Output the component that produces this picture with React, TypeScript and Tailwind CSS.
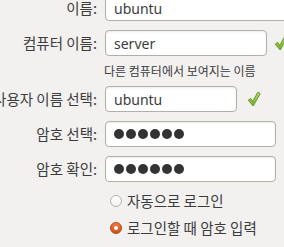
const labelFont = { fontFamily: '"Noto Sans CJK KR", "Noto Sans", sans-serif' };
const entryFont = { fontFamily: '"Noto Sans", "Noto Sans CJK KR", sans-serif' };

const Check = () => (
  <svg width="14" height="16" viewBox="0 0 14 16" className="shrink-0">
    <defs>
      <linearGradient id="chk" x1="0" y1="0" x2="0" y2="1">
        <stop offset="0" stopColor="#b5e061" />
        <stop offset="1" stopColor="#76b02a" />
      </linearGradient>
    </defs>
    <path
      d="M1.2 9.2 L3.8 7.4 L5.6 10.6 L10.8 1.2 L13.2 2.6 L6.2 15 Z"
      fill="url(#chk)"
      stroke="#5d8f1e"
      strokeWidth="0.9"
      strokeLinejoin="round"
    />
  </svg>
);

const Entry = ({ width, children }: { width: string; children: React.ReactNode }) => (
  <div
    className={`${width} h-[26px] shrink-0 flex items-center pl-2 rounded-[4px] border border-[#b3afa8] bg-white shadow-[inset_0_1px_2px_rgba(0,0,0,0.08)] text-[14px] text-[#3c3c3c]`}
    style={entryFont}
  >
    {children}
  </div>
);

const Dots = () => (
  <div className="flex gap-[2px]">
    {[0, 1, 2, 3, 4, 5].map((i) => (
      <span key={i} className="w-[10px] h-[10px] rounded-full bg-[#333333]" />
    ))}
  </div>
);

const Row = ({ label, children }: { label: string; children: React.ReactNode }) => (
  <div className="flex items-center">
    <div className="w-[97px] shrink-0 flex justify-end whitespace-nowrap text-[14.5px] text-[#3c3c3c]" style={labelFont}>
      {label}
    </div>
    <div className="ml-[8px] flex items-center">{children}</div>
  </div>
);

const Radio = ({ checked, label }: { checked?: boolean; label: string }) => (
  <div className="h-[20px] flex items-center pl-[5px]">
    {checked ? (
      <span className="w-[12px] h-[12px] rounded-full bg-gradient-to-b from-[#f07a3c] to-[#d24f12] border border-[#b9450f] flex items-center justify-center">
        <span className="w-[4px] h-[4px] rounded-full bg-white" />
      </span>
    ) : (
      <span className="w-[12px] h-[12px] rounded-full bg-gradient-to-b from-white to-[#f3f2f0] border border-[#b5b1aa]" />
    )}
    <span className="ml-[5px] text-[14.5px] text-[#3c3c3c]" style={labelFont}>
      {label}
    </span>
  </div>
);

export default function App() {
  return (
    <div className="w-[284px] h-[247px] overflow-hidden bg-[#f2f1f0]">
      <div className="flex flex-col gap-[9px] -mt-[5px]">
        <Row label="이름:">
          <Entry width="w-[200px]">ubuntu</Entry>
        </Row>
        <Row label="컴퓨터 이름:">
          <Entry width="w-[162px]">server</Entry>
          <span className="ml-[7px]">
            <Check />
          </span>
        </Row>
        <div className="h-[12px] flex items-center pl-[104px] text-[12px] text-[#3c3c3c] whitespace-nowrap" style={labelFont}>
          다른 컴퓨터에서 보여지는 이름
        </div>
        <Row label="사용자 이름 선택:">
          <Entry width="w-[132px]">ubuntu</Entry>
          <span className="ml-[10px]">
            <Check />
          </span>
        </Row>
        <Row label="암호 선택:">
          <Entry width="w-[171px]">
            <Dots />
          </Entry>
        </Row>
        <Row label="암호 확인:">
          <Entry width="w-[171px]">
            <Dots />
          </Entry>
        </Row>
        <div className="flex flex-col gap-[7px] pl-[105px]">
          <Radio label="자동으로 로그인" />
          <Radio checked label="로그인할 때 암호 입력" />
        </div>
      </div>
    </div>
  );
}
